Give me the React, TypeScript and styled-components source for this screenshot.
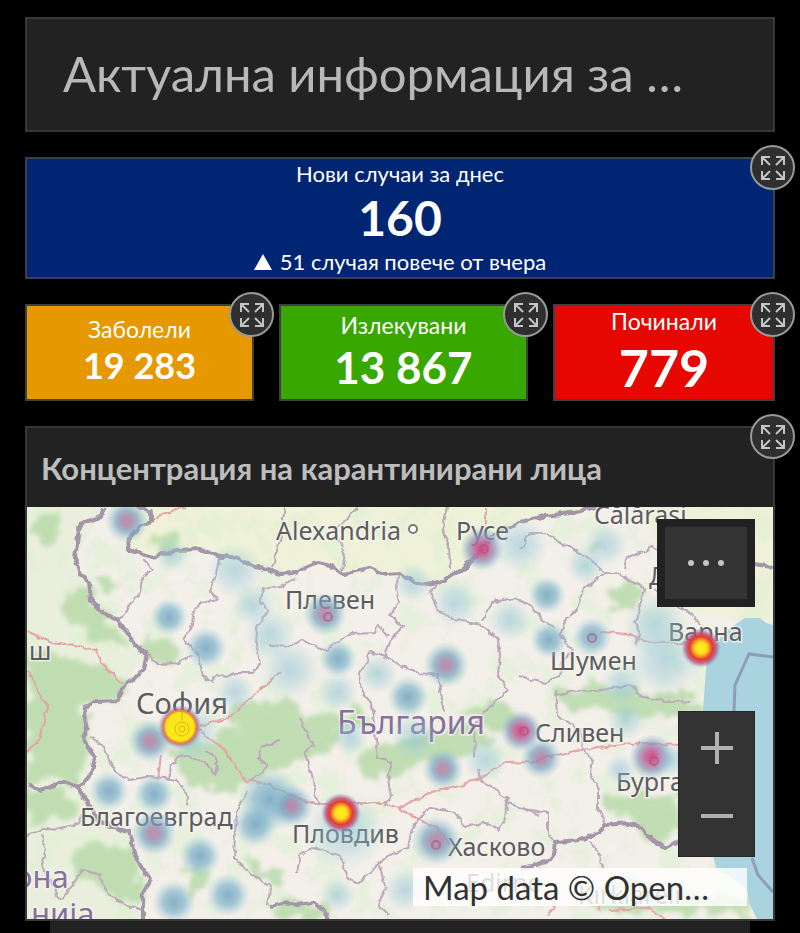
import React from 'react';
import styled, { createGlobalStyle } from 'styled-components';

const GlobalStyle = createGlobalStyle`
  * { box-sizing: border-box; }
  body {
    margin: 0;
    background: #000;
    font-family: Lato, 'Open Sans', sans-serif;
  }
  h1, h2, p { margin: 0; }
  button { font: inherit; cursor: pointer; }
`;

const Dashboard = styled.main`
  display: flex;
  flex-direction: column;
  gap: 25px;
  min-height: 100vh;
  padding: 17px 25px 0;
`;

const TitleBar = styled.header`
  display: flex;
  align-items: center;
  height: 115px;
  padding: 0 36px 4px;
  border: 2px solid #383838;
  background: #222;
`;

const Title = styled.h1`
  color: #b8b8b8;
  font-size: 49px;
  line-height: 56px;
  font-weight: 400;
  white-space: nowrap;
`;

const CardRow = styled.div`
  display: grid;
  grid-template-columns: 229fr 249fr 222fr;
  gap: 25px;
`;

const Card = styled.section<{ $color: string; $height: number }>`
  position: relative;
  display: flex;
  flex-direction: column;
  align-items: center;
  justify-content: center;
  height: ${(p) => p.$height}px;
  border: 2px solid #3c4048;
  background: ${(p) => p.$color};
  color: #fff;
`;

const CardLabel = styled.h2<{ $size?: number; $line?: number }>`
  font-size: ${(p) => p.$size ?? 22}px;
  line-height: ${(p) => p.$line ?? 24}px;
  font-weight: 400;
  white-space: nowrap;
`;

const CardValue = styled.p<{ $size: number; $line: number }>`
  font-size: ${(p) => p.$size}px;
  line-height: ${(p) => p.$line}px;
  font-weight: 700;
  white-space: nowrap;
`;

const CardTrend = styled.p`
  display: flex;
  align-items: center;
  gap: 8px;
  font-size: 22px;
  line-height: 24px;
  white-space: nowrap;
`;

const RoundButton = styled.button`
  position: absolute;
  z-index: 2;
  top: -14px;
  right: -22px;
  display: grid;
  place-items: center;
  width: 45px;
  height: 45px;
  padding: 0;
  border: 2px solid #999;
  border-radius: 50%;
  background: #2f2f2f;
  color: #c4c4c4;
`;

const MapPanel = styled.section`
  position: relative;
  border: 2px solid #383838;
  background: #222;
`;

const MapTitle = styled.h2`
  padding: 21px 14px 19px;
  color: #bdbdbd;
  font-size: 31px;
  line-height: 39px;
  font-weight: 700;
  white-space: nowrap;
`;

const MapFrame = styled.div`
  position: relative;
  aspect-ratio: 746 / 412;
  overflow: hidden;
`;

const MapDrawing = styled.svg`
  display: block;
  width: 100%;
  height: 100%;
`;

const MenuButton = styled.button`
  position: absolute;
  top: 12px;
  right: 18px;
  display: grid;
  place-items: center;
  width: 98px;
  height: 88px;
  padding: 0;
  border: 8px solid #222;
  background: #333;
  color: #c4c4c4;
`;

const ZoomGroup = styled.div`
  position: absolute;
  right: 18px;
  bottom: 62px;
  display: flex;
  flex-direction: column;
  width: 77px;
  border: 1px solid #262626;
`;

const ZoomButton = styled.button`
  display: grid;
  place-items: center;
  height: 72px;
  padding: 0;
  border: 0;
  background: #333;
  color: #b0b0b0;
`;

const Attribution = styled.p`
  position: absolute;
  right: 26px;
  bottom: 13px;
  width: 334px;
  padding: 0 10px;
  background: rgba(255, 255, 255, 0.8);
  color: #323232;
  font-size: 33px;
  line-height: 38px;
  white-space: nowrap;
`;

const NextPanel = styled.div`
  height: 12px;
  margin: -25px 25px 0;
  background: #222;
`;

function ExpandButton({ label }: { label: string }) {
  return (
    <RoundButton type="button" aria-label={label}>
      <svg width="24" height="24" viewBox="0 0 24 24" fill="none" stroke="currentColor" strokeWidth="2">
        <path d="M1 9V1h8M1 1l8 8M15 1h8v8M23 1l-8 8M1 15v8h8M1 23l8-8M23 15v8h-8M23 23l-8-8" />
      </svg>
    </RoundButton>
  );
}

const forests = [
  'M27 640 50 655 100 665 130 680 118 700 85 706 86 730 93 758 76 782 58 776 27 784Z',
  'M68 580 86 584 92 605 112 618 132 642 120 652 90 640 66 610Z',
  'M30 515 60 512 66 530 50 548 34 535Z M95 570 120 580 115 600 100 595Z',
  'M147 640 170 638 172 660 158 664 148 652Z',
  'M160 742 210 740 250 725 300 712 350 708 372 725 345 735 320 750 290 765 255 780 225 790 195 786 180 770 172 755Z',
  'M228 705 285 700 300 715 265 735 230 730Z',
  'M355 758 395 742 440 730 500 738 470 752 410 768 375 780Z M460 708 508 704 520 720 490 730Z',
  'M556 690 600 684 640 690 690 698 705 708 640 715 600 712 565 718Z',
  'M600 802 640 790 676 795 680 835 664 846 644 832 620 815Z',
  'M95 842 130 850 140 875 146 900 130 908 105 890 78 880 70 860Z',
  'M182 860 212 864 212 888 195 893 185 880Z M250 860 275 868 290 875 275 886 255 875Z',
  'M27 790 70 790 80 812 55 820 30 830Z',
  'M270 905 300 900 325 906 328 919 270 919Z',
  'M590 890 630 880 690 890 745 900 752 919 700 912 650 915 600 912Z',
  'M150 540 175 535 182 546 160 552Z M610 590 635 585 640 602 612 610Z M580 545 600 540 606 550 590 556Z',
];

const nationalBorders = [
  'M104 507 101 517 82 523 78 535 75 558 80 574 89 582 91 600 101 612 118 620 128 634 135 646 147 653 144 668 133 680 121 689 119 701 96 702 85 707 84 715 87 728 83 738 95 757 92 772 84 783 78 788 65 781 40 790 27 785',
  'M78 788 86 801 100 822 128 832 133 845 138 862 151 880 143 893 143 919',
  'M137 507 151 512 151 522 140 526 129 537 128 550 153 557 177 550 200 549 220 557 232 557 247 563 280 574 293 573 318 562 330 565 343 574 370 568 385 574 400 573 418 585 440 582 465 568 480 550 497 533 520 522 545 516 570 513 600 505',
  'M753 564 773 567',
  'M520 868 532 866 552 860 555 842 580 840 600 832 605 825 628 823 640 827 650 838 665 848 680 840',
  'M270 906 282 903 297 905 312 903 322 908 328 919',
];

const seaBorders = [
  'M734 711 735 685 749 654 773 657',
  'M752 858 758 875 773 892',
];

const provinceBorders = [
  'M143 560 153 570 142 578 140 595 127 608 120 620',
  'M219 558 216 575 210 592 218 600 200 603 193 615 192 625 184 639 198 655 203 675 211 682 217 675 226 677 235 673 254 673 260 663 256 643 258 625 268 612 261 600 263 589 280 586 295 578',
  'M147 653 160 665 175 664 192 655',
  'M400 575 395 588 398 603 390 615 402 627 390 641 385 657',
  'M270 646 290 645 303 640 312 646 325 650 350 634 375 633 378 625 388 637',
  'M385 657 400 665 420 673 438 675 440 690 445 712',
  'M385 657 370 652 366 663 360 673 362 692 372 704 376 740 378 757 392 762 388 780 391 797 384 807',
  'M440 583 430 592 437 608 450 618 480 625 487 630 498 640 500 655 498 675 508 690 495 702 485 712 475 725 474 757',
  'M483 622 492 602 515 598 530 605 545 622 555 627',
  'M520 550 530 533 545 533 555 540 565 545 580 552 592 562 605 573 618 572 628 580 645 588',
  'M605 573 583 590 577 608 565 622 560 635 573 650 562 662 560 677 545 683 520 677',
  'M625 570 627 558 640 553 652 547 660 550',
  'M645 588 640 605 635 622 640 635 634 645',
  'M655 590 665 600 690 612 700 625',
  'M555 690 557 715 580 730 583 748 592 760 590 772 598 790 598 808 605 825',
  'M555 695 580 690 595 691 630 685 642 697 665 701 690 703',
  'M448 507 442 530 449 545 450 570',
  'M285 507 280 540 272 568',
  'M358 508 335 530 345 555 342 570',
  'M300 717 313 745 304 752 312 775 315 795 320 805',
  'M297 873 300 855 313 848 340 855 347 878 358 884 372 870 378 865 390 855 408 848 412 828 425 812 430 808 455 812 465 828 483 822 500 830 504 818 508 798 480 780 478 770',
  'M380 865 385 888 378 905 388 915',
  'M90 738 102 745 112 765 120 775 130 780 150 776 178 780 188 795 187 805',
  'M170 780 172 765 180 755 205 762 215 775 218 760 205 750',
  'M280 740 262 748 258 758 268 765 260 775 250 780',
  'M248 792 236 810 235 833 234 858 250 873 270 887 268 905',
  'M27 835 45 828 62 829 75 825 86 813',
  'M42 835 47 850 42 865 60 900 72 885 83 870 100 875 108 895 128 905 142 910',
  'M590 842 600 855 603 870',
  'M506 795 508 812 M508 803 540 815',
  'M520 808 548 813 548 835 556 842',
];

const roads = [
  'M27 631 50 642 75 645 95 650 104 665 122 683',
  'M27 670 35 680 38 694 48 706 44 725 38 740 27 752',
  'M200 727 230 716 250 698 268 684 280 672',
  'M196 728 225 750 245 780 270 785 310 803 385 803 398 808',
  'M398 808 425 795 437 790 460 785 480 778 505 763 530 762 560 754 580 750 640 743 680 745',
  'M398 808 420 820 437 828 450 845',
  'M161 755 158 780',
  'M150 520 185 507 M486 507 486 545',
  'M600 632 630 634 650 643 690 643',
  'M580 905 592 895 600 910 M610 910 650 908 665 919 M545 890 555 908 548 915',
];

type Heat = 'blue' | 'pale' | 'violet' | 'pink' | 'hot';
const hotspots: [number, number, number, Heat][] = [
  [127, 521, 22, 'violet'], [169, 617, 19, 'blue'], [206, 648, 21, 'blue'], [172, 555, 17, 'pale'],
  [235, 570, 28, 'pale'], [253, 605, 22, 'pale'], [270, 635, 26, 'pale'], [235, 692, 20, 'pale'],
  [325, 614, 22, 'violet'], [338, 659, 19, 'blue'], [338, 692, 20, 'pale'], [378, 674, 20, 'pale'],
  [408, 697, 21, 'blue'], [446, 665, 23, 'violet'], [413, 583, 20, 'pale'], [455, 603, 24, 'pale'],
  [482, 549, 22, 'pink'], [547, 595, 19, 'blue'], [549, 640, 19, 'blue'], [592, 637, 20, 'blue'],
  [605, 545, 22, 'pale'], [585, 565, 20, 'pale'], [510, 620, 22, 'pale'], [655, 625, 32, 'pale'],
  [665, 660, 38, 'pale'], [622, 685, 22, 'pale'], [627, 720, 20, 'pale'], [520, 545, 28, 'pale'],
  [521, 731, 21, 'pink'], [541, 758, 21, 'violet'], [443, 769, 21, 'violet'], [350, 738, 18, 'pale'],
  [415, 738, 24, 'pale'], [485, 760, 22, 'pale'], [270, 800, 32, 'blue'], [292, 806, 22, 'violet'],
  [345, 830, 40, 'pale'], [150, 741, 22, 'violet'], [109, 791, 20, 'blue'], [154, 794, 20, 'blue'],
  [154, 833, 23, 'violet'], [200, 856, 21, 'blue'], [174, 902, 22, 'blue'], [228, 895, 22, 'blue'],
  [255, 825, 22, 'blue'], [338, 895, 18, 'pale'], [436, 841, 25, 'violet'], [405, 890, 22, 'pale'],
  [652, 757, 23, 'pink'], [672, 760, 18, 'pale'], [620, 770, 16, 'pale'], [290, 670, 30, 'pale'],
  [192, 733, 30, 'pale'], [180, 727, 22, 'hot'], [341, 813, 20, 'hot'], [701, 648, 20, 'hot'],
];

const places: [string, number, number, number, string?][] = [
  ['Alexandria', 276, 540, 25], ['Русе', 456, 540, 25], ['Călărași', 594, 524, 25],
  ['Плевен', 285, 609, 25], ['Варна', 668, 641, 25], ['Шумен', 550, 670, 25],
  ['София', 136, 714, 29], ['България', 337, 734, 32, '#86709c'], ['Сливен', 535, 742, 25],
  ['Бургас', 616, 791, 25], ['Благоевград', 80, 826, 25], ['Пловдив', 292, 843, 25],
  ['Хасково', 448, 856, 25], ['ш', 29, 660, 25], ['она', 14, 888, 31, '#86709c'],
  ['нија', 31, 925, 31, '#86709c'], ['Добрич', 649, 585, 25], ['Edirne', 466, 892, 25],
  ['Kırklareli', 578, 904, 25],
];

function QuarantineMap() {
  return (
    <MapDrawing viewBox="27 507 746 412" preserveAspectRatio="xMidYMid slice" role="img" aria-label="Карта на България">
      <defs>
        <filter id="rough" x="-10%" y="-10%" width="120%" height="120%">
          <feTurbulence type="fractalNoise" baseFrequency="0.05" numOctaves="4" seed="4" />
          <feDisplacementMap in="SourceGraphic" scale="32" xChannelSelector="R" yChannelSelector="G" />
          <feGaussianBlur stdDeviation="2" />
        </filter>
        <filter id="wobble" filterUnits="userSpaceOnUse" x="0" y="490" width="800" height="450">
          <feTurbulence type="fractalNoise" baseFrequency="0.12" numOctaves="2" seed="9" />
          <feDisplacementMap in="SourceGraphic" scale="6" xChannelSelector="R" yChannelSelector="G" />
        </filter>
        <filter id="mottle" filterUnits="userSpaceOnUse" x="27" y="507" width="746" height="412">
          <feTurbulence type="fractalNoise" baseFrequency="0.035" numOctaves="5" seed="12" />
          <feColorMatrix values="0 0 0 0 0.74  0 0 0 0 0.87  0 0 0 0 0.66  0 6 0 0 -3" />
          <feComposite in2="SourceGraphic" operator="in" />
        </filter>
        <radialGradient id="pale">
          <stop offset="0" stopColor="#80bcd0" stopOpacity=".5" />
          <stop offset=".5" stopColor="#95c9d8" stopOpacity=".35" />
          <stop offset="1" stopColor="#a8d5df" stopOpacity="0" />
        </radialGradient>
        <radialGradient id="blue">
          <stop offset="0" stopColor="#6a9dbf" stopOpacity=".8" />
          <stop offset=".5" stopColor="#7db3c9" stopOpacity=".65" />
          <stop offset="1" stopColor="#9dcfdc" stopOpacity="0" />
        </radialGradient>
        <radialGradient id="violet">
          <stop offset="0" stopColor="#b87b9b" stopOpacity=".85" />
          <stop offset=".25" stopColor="#a083aa" stopOpacity=".8" />
          <stop offset=".5" stopColor="#7ba3c0" stopOpacity=".7" />
          <stop offset="1" stopColor="#94cad8" stopOpacity="0" />
        </radialGradient>
        <radialGradient id="pink">
          <stop offset="0" stopColor="#d54d82" />
          <stop offset=".3" stopColor="#c46398" stopOpacity=".9" />
          <stop offset=".6" stopColor="#8f93ba" stopOpacity=".7" />
          <stop offset="1" stopColor="#88c4d4" stopOpacity="0" />
        </radialGradient>
        <radialGradient id="hot">
          <stop offset="0" stopColor="#fff11d" />
          <stop offset=".3" stopColor="#ffdc20" />
          <stop offset=".44" stopColor="#f58b22" />
          <stop offset=".58" stopColor="#e33a35" />
          <stop offset=".76" stopColor="#bd4c79" stopOpacity=".8" />
          <stop offset="1" stopColor="#7e9fc1" stopOpacity="0" />
        </radialGradient>
      </defs>
      <rect x="27" y="507" width="746" height="412" fill="#f3efe9" />
      <path d="M128 500 128 550 153 557 200 549 280 574 318 562 343 574 385 574 418 585 465 568 497 533 600 505Z M640 507H773V625L690 610Z" fill="#eff1d8" />
      <path d="M27 507H104L75 558 92 600 147 653 120 689 84 705 90 780 27 785Z M27 785H84L128 832 143 919H27Z" fill="#e9efdc" />
      <rect x="27" y="507" width="746" height="412" filter="url(#mottle)" opacity=".55" />
      <g fill="#bcdcae" filter="url(#rough)" opacity=".9">
        {forests.map((d) => <path key={d} d={d} />)}
      </g>
      <path d="M706 670 707 658 718 640 730 628 745 618 760 618 766 623 773 625V919H757L750 905 747 890 730 876 716 868 713 855 704 820 718 780 703 710Z" fill="#a9d3df" />
      <g fill="none" strokeLinejoin="round" filter="url(#wobble)">
        <g stroke="#e4a3a7" strokeWidth="2">{roads.map((d) => <path key={d} d={d} />)}</g>
        <g stroke="#bda8ba" strokeWidth="2">{provinceBorders.map((d) => <path key={d} d={d} />)}</g>
        <g stroke="#a595a8" strokeWidth="4">{nationalBorders.map((d) => <path key={d} d={d} />)}</g>
      </g>
      <g fill="none" stroke="#8f9dbb" strokeWidth="3">
        {seaBorders.map((d) => <path key={d} d={d} />)}
      </g>
      <g fontFamily="'Noto Sans', sans-serif" stroke="#f6f4ee" strokeWidth="3" paintOrder="stroke" strokeOpacity=".8">
        {places.map(([name, x, y, size, color]) => (
          <text key={name} x={x} y={y} fontSize={size} fill={color ?? '#5c5c60'}>{name}</text>
        ))}
      </g>
      <circle cx="413" cy="529" r="4" fill="#fff" stroke="#777" strokeWidth="2" />
      {hotspots.map(([x, y, r, kind]) => (
        <circle key={`${x}-${y}`} cx={x} cy={y} r={r} fill={`url(#${kind})`} />
      ))}
      <circle cx="180" cy="727" r="16" fill="#fbe51b" stroke="#ef8c35" strokeWidth="2" />
      <g fill="none" stroke="#d9b41a" strokeWidth="1">
        <circle cx="182" cy="729" r="3" />
        <circle cx="182" cy="729" r="7" />
        <path d="M182 712v8" />
      </g>
      <g fill="none" stroke="#ad5378" strokeWidth="2" opacity=".6">
        <circle cx="484" cy="549" r="4" />
        <circle cx="592" cy="638" r="4" />
        <circle cx="328" cy="617" r="4" />
        <circle cx="524" cy="731" r="4" />
        <circle cx="654" cy="761" r="4" />
        <circle cx="436" cy="845" r="4" />
      </g>
    </MapDrawing>
  );
}

export default function App() {
  return (
    <>
      <GlobalStyle />
      <Dashboard>
        <TitleBar>
          <Title>Актуална информация за …</Title>
        </TitleBar>

        <Card $color="#002673" $height={122}>
          <CardLabel>Нови случаи за днес</CardLabel>
          <CardValue $size={48} $line={64}>160</CardValue>
          <CardTrend>
            <svg width="18" height="16" viewBox="0 0 18 16" aria-hidden="true">
              <path d="M9 0 18 16H0Z" fill="currentColor" />
            </svg>
            51 случая повече от вчера
          </CardTrend>
          <ExpandButton label="Разгъване: нови случаи" />
        </Card>

        <CardRow>
          <Card $color="#e69800" $height={97}>
            <CardLabel $size={23}>Заболели</CardLabel>
            <CardValue $size={36} $line={48}>19 283</CardValue>
            <ExpandButton label="Разгъване: заболели" />
          </Card>
          <Card $color="#38a800" $height={97}>
            <CardLabel $size={23} $line={28}>Излекувани</CardLabel>
            <CardValue $size={44} $line={56}>13 867</CardValue>
            <ExpandButton label="Разгъване: излекувани" />
          </Card>
          <Card $color="#e60800" $height={97}>
            <CardLabel $size={23} $line={28}>Починали</CardLabel>
            <CardValue $size={52} $line={64}>779</CardValue>
            <ExpandButton label="Разгъване: починали" />
          </Card>
        </CardRow>

        <MapPanel>
          <MapTitle>Концентрация на карантинирани лица</MapTitle>
          <ExpandButton label="Разгъване: карта" />
          <MapFrame>
            <QuarantineMap />
            <MenuButton type="button" aria-label="Меню">
              <svg width="36" height="6" viewBox="0 0 36 6" fill="currentColor">
                <circle cx="3" cy="3" r="3" />
                <circle cx="18" cy="3" r="3" />
                <circle cx="33" cy="3" r="3" />
              </svg>
            </MenuButton>
            <ZoomGroup>
              <ZoomButton type="button" aria-label="Увеличаване">
                <svg width="32" height="32" viewBox="0 0 32 32" stroke="currentColor" strokeWidth="4">
                  <path d="M16 0v32M0 16h32" />
                </svg>
              </ZoomButton>
              <ZoomButton type="button" aria-label="Намаляване">
                <svg width="32" height="32" viewBox="0 0 32 32" stroke="currentColor" strokeWidth="4">
                  <path d="M0 12h32" />
                </svg>
              </ZoomButton>
            </ZoomGroup>
            <Attribution>Map data © Open…</Attribution>
          </MapFrame>
        </MapPanel>
        <NextPanel />
      </Dashboard>
    </>
  );
}
